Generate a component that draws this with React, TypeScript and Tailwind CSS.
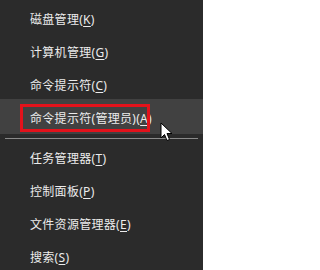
import React from "react";

const font = { fontFamily: '"Noto Sans", "Noto Sans CJK SC", sans-serif' };

function Item({ label, k }: { label: string; k: string }) {
  return (
    <div className="h-[33px] flex items-center pt-[6px] pl-[30px] text-[12px] tracking-[0.3px] text-[#ececec] whitespace-nowrap leading-none">
      <span>{label}(</span>
      <span className="underline underline-offset-2">{k}</span>
      <span>)</span>
    </div>
  );
}

export default function App() {
  return (
    <div className="w-[203px] h-[270px] bg-[#2b2b2b] overflow-hidden relative" style={font}>
      <Item label="磁盘管理" k="K" />
      <Item label="计算机管理" k="G" />
      <Item label="命令提示符" k="C" />
      <div className="h-[35px] bg-[#414141] relative flex items-center pt-[4px] pl-[30px] text-[12px] tracking-[0.3px] text-[#ececec] leading-none whitespace-nowrap">
        <span>命令提示符(管理员)(</span>
        <span className="underline underline-offset-2">A</span>
        <span>)</span>
        <div className="absolute z-10 left-[20px] top-[5px] w-[130px] h-[28px] border-[3px] border-[#e3121b]" />
      </div>
      <div className="h-[5px] pt-[4px] px-[5px]">
        <div className="h-px bg-[#8a8a8a]" />
      </div>
      <Item label="任务管理器" k="T" />
      <Item label="控制面板" k="P" />
      <Item label="文件资源管理器" k="E" />
      <Item label="搜索" k="S" />
      <svg
        className="absolute z-20 left-[160px] top-[122px]"
        width="13"
        height="20"
        viewBox="0 0 13 20"
      >
        <path
          d="M1 1 L1 16 L4.5 12.5 L7 18.5 L9.5 17.5 L7 11.5 L12 11.5 Z"
          fill="#ffffff"
          stroke="#000000"
          strokeWidth="1"
          strokeLinejoin="miter"
        />
      </svg>
    </div>
  );
}
